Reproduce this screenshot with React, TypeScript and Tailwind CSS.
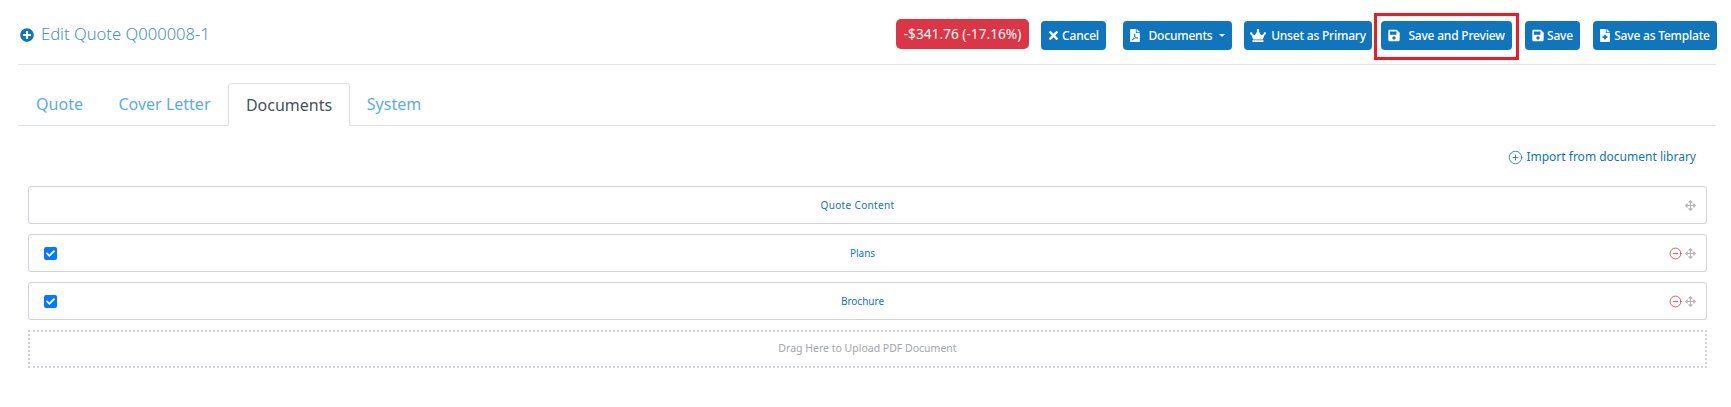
import type { ReactNode } from "react";
import { CircleMinus, CirclePlus } from "lucide-react";
import { FaArrowsAlt, FaCheck, FaCrown, FaFileMedical, FaFilePdf, FaPlusCircle, FaSave, FaTimes } from "react-icons/fa";

function ActionButton({ icon, label, className = "" }: { icon: ReactNode; label: ReactNode; className?: string }) {
  return (
    <button type="button" className={`flex h-[29px] shrink-0 items-center justify-center rounded-[4px] bg-[#0f75bc] text-[12px] font-medium tracking-[-0.2px] whitespace-nowrap text-white ${className}`}>
      {icon}
      {label}
    </button>
  );
}

function DocRow({ label, removable = false }: { label: string; removable?: boolean }) {
  return (
    <div className="flex h-[38px] items-center rounded-[3px] border border-[#ced4da] pr-[10px] pl-[15px] text-[10px]">
      <span className="w-[14px] shrink-0">
        {removable ? (
          <span className="flex h-[13px] w-[13px] items-center justify-center rounded-[2px] bg-[#007bff] text-white">
            <FaCheck className="h-[9px] w-[9px]" />
          </span>
        ) : null}
      </span>
      <span className={removable ? "flex-1 pr-[2px] text-center text-[#0f75bc]" : "flex-1 pr-[28px] text-center tracking-[0.35px] text-[#0f75bc]"}>{label}</span>
      {removable ? <CircleMinus className="mr-[3px] h-[13px] w-[13px] text-[#dc3545]" strokeWidth={1.5} /> : null}
      <FaArrowsAlt className="h-[11px] w-[11px] text-[#b5b8bd]" />
    </div>
  );
}

export default function App() {
  return (
    <div className="h-[407px] w-[1731px] overflow-hidden bg-white pl-[18px] font-['Noto_Sans','Open_Sans',sans-serif]">
      <div className="w-[1698px]">
        <header className="flex h-[65px] items-start border-b border-[#e2e4e8]">
          <h1 className="mt-[22px] flex items-center gap-[7px] pl-[2px] text-[16.6px] leading-[24px] font-light text-[#4a90c8]">
            <FaPlusCircle className="mt-[2px] h-[14px] w-[14px] text-[#0f75bc]" />
            Edit Quote Q000008-1
          </h1>
          <div className="relative -mr-px ml-auto flex items-start pt-[19px]">
            <span className="flex h-[30px] w-[133px] items-center justify-center rounded-[5px] bg-[#dc3545] text-[13.7px] whitespace-nowrap text-white">-$341.76 (-17.16%)</span>
            <ActionButton className="mt-[2px] ml-[12px] w-[65px]" icon={<FaTimes className="mr-[3px] h-[13px] w-[11px]" />} label="Cancel" />
            <ActionButton
              className="mt-[2px] ml-[17px] w-[109px]"
              icon={<FaFilePdf className="mr-[9px] h-[13px] w-[10px]" />}
              label={
                <>
                  Documents
                  <span className="ml-[7px] h-0 w-0 border-x-[3.5px] border-t-[3.5px] border-x-transparent border-t-white" />
                </>
              }
            />
            <ActionButton className="mt-[2px] ml-[12px] w-[128px]" icon={<FaCrown className="mr-[5px] h-[13px] w-[16px]" />} label="Unset as Primary" />
            <ActionButton className="mt-[2px] ml-[9px] w-[131px]" icon={<FaSave className="mr-[8px] h-[13px] w-[12px]" />} label="Save and Preview" />
            <ActionButton className="mt-[2px] ml-[13px] w-[55px]" icon={<FaSave className="mr-[3px] h-[13px] w-[12px]" />} label="Save" />
            <ActionButton className="mt-[2px] ml-[13px] w-[124px]" icon={<FaFileMedical className="mr-[4px] h-[13px] w-[10px]" />} label="Save as Template" />
            {/* annotation box drawn over the screenshot */}
            <div className="pointer-events-none absolute top-[13px] right-[198px] h-[47px] w-[145px] border-[3px] border-[#ed1c24]" />
          </div>
        </header>

        <nav className="mt-[18px] flex h-[43px] items-stretch border-b border-[#dee2e6] text-[16px] text-[#5aaced]">
          <a className="flex w-[83px] items-center justify-center">Quote</a>
          <a className="flex w-[127px] items-center justify-center">Cover Letter</a>
          <a className="-mb-px flex w-[122px] items-center justify-center rounded-t-[4px] border border-[#dee2e6] border-b-white bg-white text-[#495057]">Documents</a>
          <a className="flex w-[88px] items-center justify-center">System</a>
        </nav>

        <div className="flex justify-end pt-[22px] pr-[20px]">
          <a className="flex items-center gap-[3px] text-[12px] leading-[18px] text-[#0f75bc]">
            <CirclePlus className="h-[15px] w-[15px]" strokeWidth={1.3} />
            Import from document library
          </a>
        </div>

        <div className="mt-[20px] ml-[10px] flex w-[1679px] flex-col gap-[10px]">
          <DocRow label="Quote Content" />
          <DocRow label="Plans" removable />
          <DocRow label="Brochure" removable />
          <div className="flex h-[38px] items-center justify-center border-2 border-dotted border-[#ced4da] text-[10.5px] text-[#a3a6aa]">Drag Here to Upload PDF Document</div>
        </div>
      </div>
    </div>
  );
}
